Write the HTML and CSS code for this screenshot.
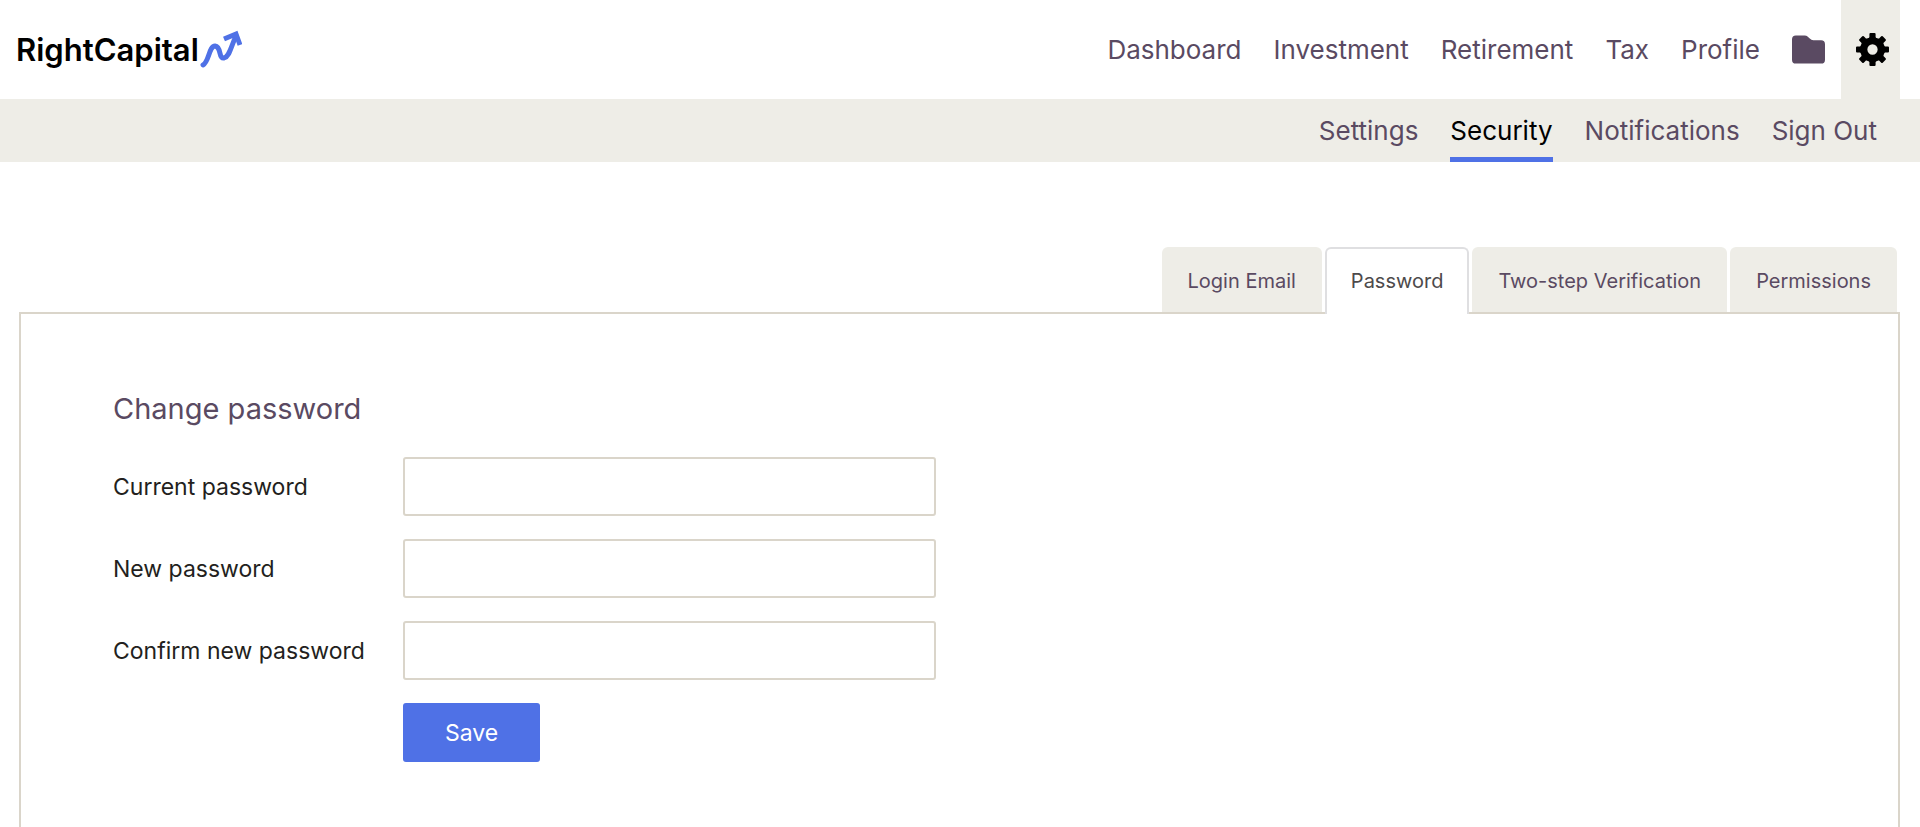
FILE: index.html
```html
<!DOCTYPE html>
<html lang="en">
<head>
    <meta charset="UTF-8">
    <meta name="viewport" content="width=device-width, initial-scale=1.0">
    <title>Security - RightCapital</title>
    <link rel="stylesheet" href="styles.css">
</head>
<body>
    <header class="header">
        <a href="#" class="logo">
            <span class="logo-text">RightCapital</span>
            <svg class="logo-arrow" width="43" height="40" viewBox="0 0 43 40" aria-hidden="true">
                <path d="M4 35C10 32 10 16 16 16C23 17 19 29 25 28C31 26 32 16 37 6" fill="none" stroke="#4f71e6" stroke-width="5" stroke-linecap="round"/>
                <path d="M25 9L37 4L41 15" fill="none" stroke="#4f71e6" stroke-width="5"/>
            </svg>
        </a>

        <nav class="main-nav" aria-label="Main">
            <a href="#">Dashboard</a>
            <a href="#">Investment</a>
            <a href="#">Retirement</a>
            <a href="#">Tax</a>
            <a href="#">Profile</a>
            <a href="#" aria-label="Documents">
                <svg width="33" height="30" viewBox="0 0 34 30" aria-hidden="true">
                    <path d="M4 0H13Q15 0 16 1L18 3Q20 5 22 5H30Q34 5 34 9V25Q34 29 30 29H4Q0 29 0 25V4Q0 0 4 0Z" fill="#5a4a62"/>
                </svg>
            </a>
            <a href="#" class="active" aria-label="Account settings">
                <svg class="gear" viewBox="-16 -16 32 32" aria-hidden="true">
                    <defs>
                        <path id="tooth" d="M-5 -9L-3 -12V-15Q-3 -16 -2 -16H2Q3 -16 3 -15V-12L5 -9Z"/>
                    </defs>
                    <circle r="8.5" fill="none" stroke="#000" stroke-width="7"/>
                    <use href="#tooth"/>
                    <use href="#tooth" transform="rotate(45)"/>
                    <use href="#tooth" transform="rotate(90)"/>
                    <use href="#tooth" transform="rotate(135)"/>
                    <use href="#tooth" transform="rotate(180)"/>
                    <use href="#tooth" transform="rotate(225)"/>
                    <use href="#tooth" transform="rotate(270)"/>
                    <use href="#tooth" transform="rotate(315)"/>
                </svg>
            </a>
        </nav>
    </header>

    <nav class="sub-nav" aria-label="Account">
        <a href="#">Settings</a>
        <a href="#" class="active">Security</a>
        <a href="#">Notifications</a>
        <a href="#">Sign Out</a>
    </nav>

    <main class="content">
        <div class="tabs" role="tablist">
            <button type="button" role="tab" class="tab">Login Email</button>
            <button type="button" role="tab" class="tab active" aria-selected="true">Password</button>
            <button type="button" role="tab" class="tab">Two-step Verification</button>
            <button type="button" role="tab" class="tab">Permissions</button>
        </div>

        <section class="panel">
            <h1>Change password</h1>
            <form class="password-form" action="#" method="POST">
                <label for="currentPassword">Current password</label>
                <input type="password" id="currentPassword" name="currentPassword">

                <label for="newPassword">New password</label>
                <input type="password" id="newPassword" name="newPassword">

                <label for="confirmPassword">Confirm new password</label>
                <input type="password" id="confirmPassword" name="confirmPassword">

                <button type="submit" class="save-button">Save</button>
            </form>
        </section>
    </main>
</body>
</html>
```

FILE: styles.css
```css
* {
    box-sizing: border-box;
}

body {
    font-family: 'Inter', sans-serif;
    font-size: 23px;
    margin: 0;
    min-height: 100vh;
    display: flex;
    flex-direction: column;
    background: #ffffff;
    color: #231f20;
}

a {
    color: #5a4a62;
    text-decoration: none;
}

/* Header */
.header {
    display: flex;
    justify-content: space-between;
    height: 99px;
    padding: 0 20px 0 16px;
}

.logo {
    display: flex;
    align-items: center;
}

.logo-text {
    font-size: 31px;
    font-weight: 600;
    color: #000000;
}

.main-nav {
    display: flex;
    font-size: 26px;
}

.main-nav a {
    display: flex;
    align-items: center;
    padding: 0 16px;
}

.main-nav .active {
    padding: 0 11px 0 15px;
    background: #eeede7;
}

.gear {
    width: 33px;
    height: 33px;
}

/* Second level navigation */
.sub-nav {
    display: flex;
    justify-content: flex-end;
    gap: 32px;
    height: 63px;
    padding: 0 43px;
    font-size: 26px;
    background: #eeede7;
}

.sub-nav a {
    display: flex;
    align-items: center;
    border-top: 5px solid transparent;
    border-bottom: 5px solid transparent;
}

.sub-nav .active {
    color: #000000;
    border-bottom-color: #4f71e6;
}

/* Tabs */
.content {
    flex: 1;
    display: flex;
    flex-direction: column;
    padding: 85px 20px 0 19px;
}

.tabs {
    display: flex;
    justify-content: flex-end;
    gap: 3px;
    padding-right: 3px;
}

.tab {
    height: 65px;
    padding: 2px 26px 0;
    font-family: inherit;
    font-size: 20px;
    color: #5a4a62;
    background: #eeede7;
    border: none;
    border-radius: 6px 6px 0 0;
    cursor: pointer;
}

.tab.active {
    height: 67px;
    margin-bottom: -2px;
    padding: 0 24px 2px;
    color: #4d4a4b;
    background: #ffffff;
    border: 2px solid #dfdfe1;
    border-bottom: none;
    z-index: 1;
}

.panel {
    flex: 1;
    padding: 76px 92px 62px;
    border: 2px solid #dad5ca;
    border-bottom: none;
}

h1 {
    margin: 0 0 29px;
    font-size: 29px;
    font-weight: 400;
    line-height: 38px;
    color: #5a4a62;
}

/* Password form */
.password-form {
    display: grid;
    grid-template-columns: 290px minmax(0, 533px);
    row-gap: 23px;
    align-items: center;
}

.password-form input {
    height: 59px;
    padding: 0 16px;
    font: inherit;
    border: 2px solid #dad5ca;
    border-radius: 3px;
}

.save-button {
    grid-column: 2;
    justify-self: start;
    height: 59px;
    padding: 0 42px;
    font: inherit;
    color: #ffffff;
    background: #4f71e6;
    border: none;
    border-radius: 3px;
    cursor: pointer;
}
```
